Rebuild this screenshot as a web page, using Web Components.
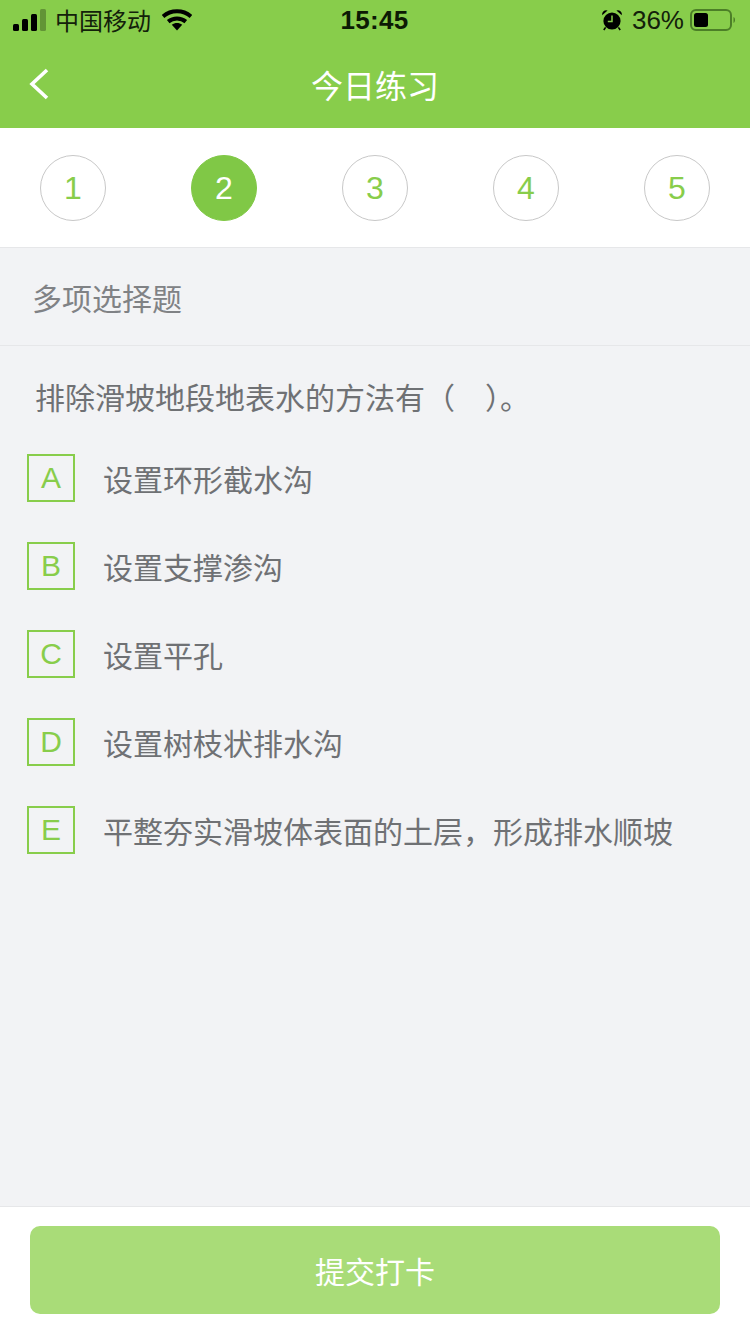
<!DOCTYPE html>
<html lang="zh">
<head>
<meta charset="utf-8">
<title>今日练习</title>
<style>
  html, body { margin: 0; padding: 0; }
  body {
    width: 750px;
    height: 1334px;
    overflow: hidden;
    background: #f2f3f5;
    font-family: "Liberation Sans", "Noto Sans CJK SC", sans-serif;
  }
  practice-page { height: 1334px; }
</style>
</head>
<body>
<practice-page>
  <status-bar></status-bar>
  <nav-bar>今日练习</nav-bar>
  <step-row>
    <step-dot>1</step-dot>
    <step-dot active>2</step-dot>
    <step-dot>3</step-dot>
    <step-dot>4</step-dot>
    <step-dot>5</step-dot>
  </step-row>
  <section-head>多项选择题</section-head>
  <question-text>排除滑坡地段地表水的方法有（　）。</question-text>
  <answer-list>
    <answer-item letter="A">设置环形截水沟</answer-item>
    <answer-item letter="B">设置支撑渗沟</answer-item>
    <answer-item letter="C">设置平孔</answer-item>
    <answer-item letter="D">设置树枝状排水沟</answer-item>
    <answer-item letter="E">平整夯实滑坡体表面的土层，形成排水顺坡</answer-item>
  </answer-list>
  <submit-bar>提交打卡</submit-bar>
</practice-page>

<script>
  const CJK = '"Noto Sans CJK SC", sans-serif';

  // small helper, every element here is just markup + styles in a shadow root
  class Base extends HTMLElement {
    constructor() {
      super();
      this.attachShadow({ mode: "open" });
      this.shadowRoot.innerHTML = this.markup();
    }
    markup() { return ""; }
  }

  class PracticePage extends Base {
    markup() {
      return `<style>
        :host { display: flex; flex-direction: column; width: 750px; }
        ::slotted(answer-list) { flex: 1; }
      </style><slot></slot>`;
    }
  }

  class StatusBar extends Base {
    markup() {
      return `<style>
        :host {
          display: grid;
          grid-template-columns: 1fr auto 1fr;
          align-items: center;
          height: 40px;
          padding: 0 15px 0 13px;
          background: #88cd4b;
          color: #0c1a04;
          font-family: "Liberation Sans", ${CJK};
        }
        .left, .right { display: flex; align-items: center; }
        .right { justify-content: flex-end; }
        .carrier { font: 24px ${CJK}; margin-left: 9px; line-height: 40px; color: #13210a; }
        .wifi { margin-left: 11px; }
        .time { font-size: 26px; font-weight: 600; letter-spacing: 0.3px; margin-left: 1px; }
        .pct { font-size: 26px; margin-left: 9px; margin-right: 6px; color: #13210a; }
        svg { display: block; }
      </style>
      <div class="left">
        <svg width="33" height="22" viewBox="0 0 33 22">
          <rect x="0" y="15" width="6" height="7" rx="1.5" fill="#000"/>
          <rect x="9" y="10" width="6" height="12" rx="1.5" fill="#000"/>
          <rect x="18" y="5" width="6" height="17" rx="1.5" fill="#000"/>
          <rect x="27" y="0" width="6" height="22" rx="1.5" fill="#000" fill-opacity=".28"/>
        </svg>
        <span class="carrier">中国移动</span>
        <svg class="wifi" width="30" height="22" viewBox="0 0 30 22">
          <path d="M1 7.5C8.8 .6 21.2 .6 29 7.5" fill="none" stroke="#000" stroke-width="4"/>
          <path d="M6.2 12.6C11.2 8.4 18.8 8.4 23.8 12.6" fill="none" stroke="#000" stroke-width="4"/>
          <path d="M9.8 15.8C12.8 13.4 17.2 13.4 20.2 15.8L15 21.5Z" fill="#000"/>
        </svg>
      </div>
      <div class="time">15:45</div>
      <div class="right">
        <svg width="22" height="22" viewBox="0 0 22 22">
          <circle cx="11" cy="12" r="8.6" fill="#000"/>
          <path d="M1.2 6.2A4 4 0 0 1 6.6 1.6ZM20.8 6.2A4 4 0 0 0 15.4 1.6Z" fill="#000"/>
          <path d="M4.6 18.4 2.8 21M17.4 18.4 19.2 21" stroke="#000" stroke-width="1.6"/>
          <path d="M11 6.6V12.6H6.8" fill="none" stroke="#88cd4b" stroke-width="1.5"/>
        </svg>
        <span class="pct">36%</span>
        <svg width="45" height="22" viewBox="0 0 45 22">
          <rect x="1" y="1" width="40" height="20" rx="5" fill="none" stroke="#4c7f27" stroke-width="2"/>
          <rect x="4" y="4" width="14" height="14" rx="2.5" fill="#000"/>
          <path d="M43.5 8v6c1-.4 1.5-1.6 1.5-3s-.5-2.600-1.500-3Z" fill="#4c7f27"/>
        </svg>
      </div>`;
    }
  }

  class NavBar extends Base {
    markup() {
      return `<style>
        :host {
          display: grid;
          grid-template-columns: 1fr auto 1fr;
          align-items: center;
          height: 88px;
          background: #88cd4b;
          color: #fff;
          font: 32px ${CJK};
        }
        .back { padding-left: 29px; display: flex; }
        svg { display: block; }
      </style>
      <div class="back">
        <svg width="20" height="32" viewBox="0 0 20 32">
          <path d="M18 2 3 16l15 14" fill="none" stroke="#fff" stroke-width="3.6"/>
        </svg>
      </div>
      <div><slot></slot></div>
      <div></div>`;
    }
  }

  class StepRow extends Base {
    markup() {
      return `<style>
        :host {
          display: flex;
          justify-content: space-between;
          padding: 27px 40px 26px;
          background: #fff;
          border-bottom: 1px solid #e6e7e9;
        }
      </style><slot></slot>`;
    }
  }

  class StepDot extends Base {
    markup() {
      return `<style>
        :host {
          display: flex;
          align-items: center;
          justify-content: center;
          box-sizing: border-box;
          width: 66px;
          height: 66px;
          border-radius: 50%;
          border: 1px solid #c8c8c8;
          color: #88cd4b;
          font: 32px "Liberation Sans", sans-serif;
        }
        :host([active]) {
          background: #80c846;
          border-color: #80c846;
          color: #fff;
        }
      </style><slot></slot>`;
    }
  }

  class SectionHead extends Base {
    markup() {
      return `<style>
        :host {
          display: flex;
          align-items: center;
          height: 97px;
          box-sizing: content-box;
          padding-left: 32px;
          padding-bottom: 0;
          border-bottom: 1px solid #e6e7e9;
          color: #808285;
          font: 30px ${CJK};
        }
      </style><slot></slot>`;
    }
  }

  class QuestionText extends Base {
    markup() {
      return `<style>
        :host {
          display: block;
          padding: 28px 0 0 35px;
          height: 80px;
          box-sizing: border-box;
          line-height: 44px;
          color: #6f7174;
          font: 30px/44px ${CJK};
        }
      </style><slot></slot>`;
    }
  }

  class AnswerList extends Base {
    markup() {
      return `<style>
        :host {
          display: flex;
          flex-direction: column;
          gap: 40px;
          padding: 28px 0 0 27px;
        }
      </style><slot></slot>`;
    }
  }

  class AnswerItem extends Base {
    markup() {
      return `<style>
        :host {
          display: flex;
          align-items: center;
          gap: 28px;
          color: #6f7174;
          font: 30px ${CJK};
        }
        .box {
          display: flex;
          align-items: center;
          justify-content: center;
          box-sizing: border-box;
          flex: none;
          width: 48px;
          height: 48px;
          border: 2px solid #88cd4b;
          color: #88cd4b;
          font: 30px "Liberation Sans", sans-serif;
        }
      </style>
      <div class="box">${this.getAttribute("letter") || ""}</div>
      <div><slot></slot></div>`;
    }
  }

  class SubmitBar extends Base {
    markup() {
      return `<style>
        :host {
          display: block;
          height: 128px;
          box-sizing: border-box;
          padding: 19px 30px 0;
          background: #fff;
          border-top: 1px solid #e6e7e9;
        }
        .btn {
          display: flex;
          align-items: center;
          justify-content: center;
          height: 88px;
          border-radius: 10px;
          background: #a9dc78;
          color: #fff;
          font: 30px ${CJK};
        }
      </style><div class="btn"><slot></slot></div>`;
    }
  }

  customElements.define("practice-page", PracticePage);
  customElements.define("status-bar", StatusBar);
  customElements.define("nav-bar", NavBar);
  customElements.define("step-row", StepRow);
  customElements.define("step-dot", StepDot);
  customElements.define("section-head", SectionHead);
  customElements.define("question-text", QuestionText);
  customElements.define("answer-list", AnswerList);
  customElements.define("answer-item", AnswerItem);
  customElements.define("submit-bar", SubmitBar);
</script>
</body>
</html>
